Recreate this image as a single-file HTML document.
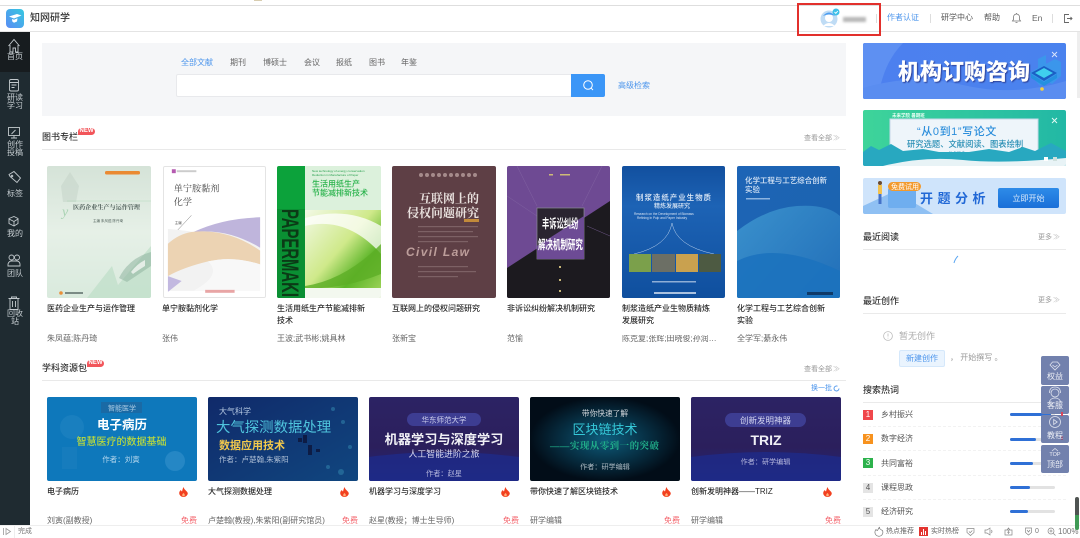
<!DOCTYPE html>
<html lang="zh"><head><meta charset="utf-8"><title>知网研学</title>
<style>
html,body{margin:0;padding:0;background:#fff;width:1080px;height:538px;overflow:hidden}
body{position:relative;font-family:"Liberation Sans","Noto Sans CJK SC",sans-serif;color:#333}
#root{position:absolute;left:0;top:0;width:1080px;height:538px;overflow:hidden;background:#fff;filter:blur(.3px)}
.b{position:absolute;box-sizing:border-box}
.t{position:absolute;white-space:nowrap;line-height:1;font-size:8px}
.side{color:#c6cdd1;text-align:center;width:30px;left:0}
.bk{font-weight:500;color:#2b2b2b}
.au{color:#666}
.h{font-size:9px;font-weight:500;color:#333}
.more{color:#999;font-size:7px}
.free{color:#f4646c;font-size:8px}
svg{position:absolute;overflow:hidden}
svg text{font-family:"Liberation Sans","Noto Sans CJK SC",sans-serif}
svg .s{font-family:"Liberation Serif","Noto Serif CJK SC",serif}
.cov{border-radius:2px}
</style></head><body><div id="root">

<!-- top strip + header -->
<div class="b" style="left:0;top:5px;width:1080px;height:1px;background:#dedede"></div>
<div class="b" style="left:254px;top:0;width:8px;height:1px;background:#d8cdb0"></div>
<div class="b" style="left:0;top:31px;width:1080px;height:1px;background:#e4e4e4"></div>
<svg style="left:6px;top:9px" width="18" height="19" viewBox="0 0 18 19"><defs><linearGradient id="lg" x1="0" y1="1" x2="1" y2="0"><stop offset="0" stop-color="#5a8cf5"/><stop offset="1" stop-color="#35c8e0"/></linearGradient></defs><rect width="18" height="19" rx="4" fill="url(#lg)"/><path d="M3 7.500L11 5l4.500 1.500L8 9.500z" fill="#fff"/><path d="M6 10l2 .8 3.500-1.500-.5 3.200-3 1.200L6.300 12.500z" fill="#fff"/></svg>
<div class="t" style="left:30px;top:14px;font-size:10px;font-weight:500;color:#333">知网研学</div>

<div class="b" style="left:797px;top:3px;width:84px;height:33px;border:2px solid #e2302c"></div>
<svg style="left:820px;top:8px" width="22" height="20" viewBox="0 0 22 20"><circle cx="9" cy="11" r="8.500" fill="#bfdcf5"/><circle cx="9" cy="10" r="4" fill="#fff"/><path d="M3 8q6-7 12 0q-6-3-12 0z" fill="#4c9df0"/><path d="M3 18q6-6 12 0z" fill="#fff"/><circle cx="16" cy="4" r="3.500" fill="#3ec0e8"/><path d="M14.500 4l1.300 1.300 2-2.300" stroke="#fff" fill="none" stroke-width=".9"/></svg>
<div class="b" style="left:843px;top:17px;width:23px;height:5px;background:#b8b8b8;filter:blur(1.200px)"></div>
<div class="b" style="left:876px;top:14px;width:1px;height:9px;background:#ddd"></div>
<div class="t" style="left:887px;top:14px;color:#4c95ec">作者认证</div>
<div class="b" style="left:930px;top:14px;width:1px;height:9px;background:#ddd"></div>
<div class="t" style="left:941px;top:14px;color:#555">研学中心</div>
<div class="t" style="left:984px;top:14px;color:#555">帮助</div>
<svg style="left:1011px;top:12px" width="11" height="12" viewBox="0 0 11 12" fill="none" stroke="#777" stroke-width=".8"><path d="M1.500 9h8l-1-1.500V5a3 3 0 0 0-6 0v2.500z"/><path d="M4.500 10.500h2M5.500 1v1"/></svg>
<div class="t" style="left:1032px;top:14px;color:#666;font-size:8.500px">En</div>
<div class="b" style="left:1052px;top:14px;width:1px;height:9px;background:#ddd"></div>
<svg style="left:1063px;top:13px" width="10" height="11" viewBox="0 0 10 11" fill="none" stroke="#666" stroke-width=".9"><path d="M6 1.500H1.500v8H6M4 5.500h5M7.500 4L9 5.500 7.500 7"/></svg>

<!-- sidebar -->
<div class="b" style="left:0;top:32px;width:30px;height:493px;background:#1f2b31"></div>
<div class="b" style="left:0;top:32px;width:30px;height:40px;background:#171c1f"></div>
<svg style="left:0;top:32px" width="30" height="290" viewBox="0 0 30 290" fill="none" stroke="#c2c9cd" stroke-width=".9">
<path d="M8.500 14L14 7.500 19.500 14M10 13v7h3v-4h2.500v4H18v-7"/>
<rect x="9.500" y="47.500" width="9" height="11.500" rx="1.500"/><path d="M9.500 50.500h9M11.500 53h5M11.500 55.500h3"/>
<rect x="8.500" y="95.500" width="11" height="8"/><path d="M11 106h6M14 103.500v2.500M11.500 102l4-4"/>
<path d="M9 142.500l5-3 6.500 6.500-3.500 4.500-7-6z"/><circle cx="12" cy="144" r=".8"/>
<path d="M14 184.500l4 2v5l-4 2.500-5-2.500v-5zM9 187l5 2.500 4-2.500M14 189.500V194"/>
<circle cx="11.500" cy="225.500" r="2.500"/><circle cx="17" cy="225.500" r="2.500"/><path d="M8 234v-2q1-3 3.500-3h5q3 0 3.500 3v2z"/>
<path d="M8.500 266.500h11M11.500 266.500v-1.500h5v1.500M10 266.500v11h8v-11M12.500 269v6M15.500 269v6"/>
</svg>
<div class="t side" style="top:53px">首页</div>
<div class="t side" style="top:94px">研读</div><div class="t side" style="top:102px">学习</div>
<div class="t side" style="top:141px">创作</div><div class="t side" style="top:149px">投稿</div>
<div class="t side" style="top:190px">标签</div>
<div class="t side" style="top:230px">我的</div>
<div class="t side" style="top:270px">团队</div>
<div class="t side" style="top:310px">回收</div><div class="t side" style="top:318px">站</div>

<!-- search panel -->
<div class="b" style="left:42px;top:43px;width:804px;height:73px;background:#f5f6f8"></div>
<div class="t" style="left:181px;top:59px;color:#4c95ec">全部文献</div>
<div class="t" style="left:230px;top:59px;color:#666">期刊</div>
<div class="t" style="left:263px;top:59px;color:#666">博硕士</div>
<div class="t" style="left:304px;top:59px;color:#666">会议</div>
<div class="t" style="left:336px;top:59px;color:#666">报纸</div>
<div class="t" style="left:369px;top:59px;color:#666">图书</div>
<div class="t" style="left:401px;top:59px;color:#666">年鉴</div>
<div class="b" style="left:176px;top:74px;width:396px;height:23px;background:#fff;border:1px solid #e8e9ec;border-radius:2px"></div>
<div class="b" style="left:571px;top:74px;width:34px;height:23px;background:#3b96f7;border-radius:0 2px 2px 0"></div>
<svg style="left:582px;top:79px" width="13" height="13" viewBox="0 0 13 13" fill="none" stroke="#fff" stroke-width="1"><circle cx="6" cy="6" r="4.300"/><path d="M9.200 9.200L11 11"/></svg>
<div class="t" style="left:618px;top:82px;color:#4c95ec">高级检索</div>

<!-- section 1 -->
<div class="t h" style="left:42px;top:133px">图书专栏</div>
<div class="b" style="left:78px;top:128px;width:17px;height:7px;background:#f2555a;border-radius:4px 4px 4px 0;color:#fff;font-size:6px;line-height:7px;text-align:center;font-weight:700">NEW</div>
<div class="t more" style="left:804px;top:135px">查看全部</div><div class="t more" style="left:833px;top:135px;color:#bbb">≫</div>
<div class="b" style="left:42px;top:149px;width:804px;height:1px;background:#e9e9e9"></div>

<!-- Book 1 -->
<svg class="cov" style="left:47px;top:166px" width="104" height="132" viewBox="0 0 104 132">
<defs><linearGradient id="b1" x1="0" y1="0" x2="0" y2="1"><stop offset="0" stop-color="#d5e3d8"/><stop offset=".5" stop-color="#e6f0e7"/><stop offset="1" stop-color="#d9eadd"/></linearGradient></defs>
<rect width="104" height="132" fill="url(#b1)"/>
<path d="M14 20l9-14 9 14-3 16H16z" fill="#c5d3c8" opacity=".55"/>
<rect x="58" y="5" width="35" height="3.500" rx="1.500" fill="#ea8a32"/>
<path d="M20 35H104" stroke="#a8d4b4" stroke-width=".4"/>
<text class="s" x="26" y="43.500" font-size="6.100" font-weight="700" fill="#4a5a55">医药企业生产与运作管理</text>
<text x="46" y="56" font-size="3.500" fill="#55655f">主编  朱凤蕴  陈丹琦</text>
<text class="s" x="15" y="50" font-size="14" font-style="italic" fill="#a9d3b3">y</text>
<path d="M60 132L104 80V132zM40 132l25-32 10 32z" fill="#bddec8" opacity=".7"/>
<path d="M72 112q10-20 32-26v14q-15 10-24 16z" fill="#8fb4a1" opacity=".55"/>
<path d="M84 106q6-8 14-12v6q-8 5-12 8z" fill="#f2f6f3" opacity=".8"/>
<circle cx="14" cy="127" r="1.800" fill="#e9903a"/><rect x="18" y="126" width="18" height="2" fill="#7b8b85"/>
</svg>
<!-- Book 2 -->
<svg class="cov" style="left:162.500px;top:166px;border:.5px solid #e4e4e4;box-sizing:border-box" width="103" height="132" viewBox="0 0 103 132">
<rect width="103" height="132" fill="#fff"/>
<rect x="8" y="2" width="4" height="4" fill="#b55ab0"/><rect x="13" y="3" width="20" height="2" fill="#ccc"/>
<text class="s" x="10" y="24.500" font-size="9.300" fill="#444">单宁胺黏剂</text>
<text class="s" x="10" y="38.500" font-size="9.300" fill="#444">化学</text>
<path d="M14 64L28 49" stroke="#777" stroke-width=".5"/><text x="11" y="58" font-size="3.500" fill="#555">主编</text>
<path d="M4 63Q18 64 30 66Q60 52 98 51V126H4z" fill="#f2f2f2"/>
<path d="M30 66Q60 52 98 51V82Q65 62 30 66z" fill="#bfb5dc"/>
<path d="M4 78Q15 68 28 66Q65 62 98 85V99Q70 90 45 96Q20 102 4 111z" fill="#ecd3b3"/>
<path d="M4 111V127L18 116z" fill="#c2b8e0"/>
<path d="M45 96Q70 90 98 99V126H30Q60 110 45 96z" fill="#f8f8f8"/>
<rect x="42" y="125" width="30" height="3" fill="#e8a5a5"/>
</svg>
<!-- Book 3 -->
<svg class="cov" style="left:277px;top:166px" width="104" height="132" viewBox="0 0 104 132">
<defs><linearGradient id="b3" x1="0" y1="0" x2="1" y2="1"><stop offset="0" stop-color="#f2f9e6"/><stop offset=".45" stop-color="#cfe98a"/><stop offset=".7" stop-color="#5cb528"/><stop offset="1" stop-color="#a8d860"/></linearGradient></defs>
<rect width="104" height="132" fill="#d9efd8"/>
<rect x="28" y="0" width="76" height="44" fill="#dcf1dc"/>
<rect x="28" y="44" width="76" height="88" fill="url(#b3)"/>
<path d="M28 60Q70 50 104 88V60Q70 40 28 52z" fill="#fff" opacity=".75"/>
<path d="M28 120q40-6 76-42v30q-40 16-76 14z" fill="#5cae26" opacity=".8"/>
<rect x="28" y="122" width="76" height="10" fill="#f3f8ef"/>
<rect width="28" height="132" fill="#0ca23b"/>
<rect x="0" y="43" width="28" height="89" fill="#0a8f33"/>
<text x="35" y="6" font-size="3" fill="#2aa050">New technology of energy conservation</text>
<text x="35" y="10" font-size="3" fill="#2aa050">Reduction in Manufacture of Paper</text>
<text x="35" y="20.500" font-size="8" font-weight="500" fill="#27b24a">生活用纸生产</text>
<text x="35" y="29.500" font-size="8" font-weight="500" fill="#27b24a">节能减排新技术</text>
<text transform="translate(4,43) rotate(90)" font-size="24" font-weight="700" textLength="88" lengthAdjust="spacingAndGlyphs" fill="#0b3a16" y="-1">PAPERMAKI</text>
</svg>
<!-- Book 4 -->
<svg class="cov" style="left:392px;top:166px" width="104" height="132" viewBox="0 0 104 132">
<rect width="104" height="132" fill="#5e3f45"/>
<g fill="#a58b8b"><circle cx="29" cy="9" r="2"/><circle cx="35" cy="9" r="2"/><circle cx="41" cy="9" r="2"/><circle cx="47" cy="9" r="2"/><circle cx="53" cy="9" r="2"/><circle cx="59" cy="9" r="2"/><circle cx="65" cy="9" r="2"/><circle cx="71" cy="9" r="2"/><circle cx="77" cy="9" r="2"/><circle cx="83" cy="9" r="2"/></g>
<text class="s" x="27" y="36.500" font-size="12" font-weight="700" fill="#e9e1de">互联网上的</text>
<text class="s" x="15" y="51" font-size="12" font-weight="700" fill="#e9e1de">侵权问题研究</text>
<rect x="72" y="53" width="15" height="3" fill="#c28a3a"/>
<g fill="#7d6165"><rect x="26" y="60" width="60" height="1.200"/><rect x="26" y="65" width="55" height="1.200"/><rect x="26" y="70" width="60" height="1.200"/><rect x="26" y="75" width="50" height="1.200"/><rect x="26" y="100" width="50" height="1.200"/><rect x="26" y="105" width="58" height="1.200"/><rect x="26" y="110" width="40" height="1.200"/></g>
<text x="14" y="90" font-size="12" font-weight="700" font-style="italic" fill="#bd9e9b" textLength="63">Civil Law</text>
</svg>
<!-- Book 5 -->
<svg class="cov" style="left:507px;top:166px" width="103" height="132" viewBox="0 0 103 132">
<rect width="103" height="132" fill="#6e4a93"/>
<path d="M0 102L103 35V132H0z" fill="#1c1a1f"/>
<path d="M10 0L30 40M95 0L75 40M0 30L30 50M103 70L80 60" stroke="#8568a5" stroke-width=".4" fill="none"/>
<rect x="42" y="8" width="4" height="1.500" fill="#cdbb77"/><rect x="53" y="8" width="10" height="1.500" fill="#cdbb77"/>
<rect x="30" y="42" width="47" height="51" fill="#2a2430" stroke="#8d8d96" stroke-width=".7"/>
<path d="M30 93V80L77 50V93z" fill="#6d4b95"/>
<text transform="translate(35,62) scale(1,1.700)" font-size="7.300" font-weight="700" fill="#fff">丰诉讼纠纷</text>
<text transform="translate(31,83) scale(1,1.700)" font-size="7.500" font-weight="700" fill="#fff">解决机制研究</text>
<g fill="#c9b878"><rect x="52" y="100" width="2" height="2"/><rect x="52" y="113" width="2" height="2"/><rect x="52" y="124" width="2" height="2"/></g>
</svg>
<!-- Book 6 -->
<svg class="cov" style="left:622px;top:166px" width="103" height="132" viewBox="0 0 103 132">
<defs><linearGradient id="b6" x1="0" y1="0" x2="0" y2="1"><stop offset="0" stop-color="#12509f"/><stop offset=".3" stop-color="#1d63b5"/><stop offset="1" stop-color="#0f4f9e"/></linearGradient></defs>
<rect width="103" height="132" fill="url(#b6)"/>
<text x="14" y="34" font-size="7.500" font-weight="500" fill="#e8f0fa" textLength="75">制浆造纸产业生物质</text>
<text x="32" y="42" font-size="6" font-weight="500" fill="#dbe7f6">精炼发展研究</text>
<text x="12" y="49" font-size="3.200" fill="#d5e2f3">Research on the Development of Biomass</text>
<text x="15" y="53" font-size="3.200" fill="#d5e2f3">Refining in Pulp and Paper Industry</text>
<path d="M50 57Q46 80 12 88M50 57Q54 80 92 88" stroke="#bcd2ec" stroke-width=".5" fill="none"/>
<rect x="7" y="88" width="22" height="18" fill="#7ba04b"/>
<rect x="30" y="88" width="23" height="18" fill="#6c6f65"/>
<rect x="54" y="88" width="22" height="18" fill="#c9a14f"/>
<rect x="77" y="88" width="22" height="18" fill="#4d5a42"/>
<rect x="30" y="115" width="44" height="1.500" fill="#8eaed6"/><rect x="32" y="126" width="42" height="2" fill="#aac2e0"/>
</svg>
<!-- Book 7 -->
<svg class="cov" style="left:737px;top:166px" width="103" height="132" viewBox="0 0 103 132">
<defs><linearGradient id="b7" x1="0" y1="0" x2="1" y2="1"><stop offset="0" stop-color="#1d64b6"/><stop offset="1" stop-color="#1c64ad"/></linearGradient><linearGradient id="b7b" x1="0" y1="0" x2="1" y2=".8"><stop offset="0" stop-color="#52b5e0"/><stop offset="1" stop-color="#2a7cc4"/></linearGradient></defs>
<rect width="103" height="132" fill="url(#b7)"/>
<path d="M0 65Q30 42 60 40T103 50V132H0z" fill="url(#b7b)" opacity=".55"/>
<path d="M0 95Q40 75 103 105V132H0z" fill="#1c72be" opacity=".9"/>
<text x="8" y="17" font-size="7.500" font-weight="500" fill="#dbe8f7" textLength="82">化学工程与工艺综合创新</text>
<text x="8" y="26" font-size="7.500" font-weight="500" fill="#dbe8f7">实验</text>
<rect x="9" y="32" width="24" height="1.500" fill="#8cb4e0"/>
<rect x="70" y="126" width="26" height="3" fill="#0f3a68"/>
</svg>

<div class="t bk" style="left:47px;top:305px">医药企业生产与运作管理</div>
<div class="t bk" style="left:162px;top:305px">单宁胺黏剂化学</div>
<div class="t bk" style="left:277px;top:305px">生活用纸生产节能减排新</div><div class="t bk" style="left:277px;top:317px">技术</div>
<div class="t bk" style="left:392px;top:305px">互联网上的侵权问题研究</div>
<div class="t bk" style="left:507px;top:305px">非诉讼纠纷解决机制研究</div>
<div class="t bk" style="left:622px;top:305px">制浆造纸产业生物质精炼</div><div class="t bk" style="left:622px;top:317px">发展研究</div>
<div class="t bk" style="left:737px;top:305px">化学工程与工艺综合创新</div><div class="t bk" style="left:737px;top:317px">实验</div>
<div class="t au" style="left:47px;top:335px">朱凤蕴;陈丹琦</div>
<div class="t au" style="left:162px;top:335px">张伟</div>
<div class="t au" style="left:277px;top:335px">王波;武书彬;姚具林</div>
<div class="t au" style="left:392px;top:335px">张新宝</div>
<div class="t au" style="left:507px;top:335px">范愉</div>
<div class="t au" style="left:622px;top:335px;width:100px;overflow:hidden;text-overflow:ellipsis">陈克复;张辉;田晓俊;孙润仓;...</div>
<div class="t au" style="left:737px;top:335px">全学军;綦永伟</div>

<!-- section 2 -->
<div class="t h" style="left:42px;top:364px">学科资源包</div>
<div class="b" style="left:87px;top:360px;width:17px;height:7px;background:#f2555a;border-radius:4px 4px 4px 0;color:#fff;font-size:6px;line-height:7px;text-align:center;font-weight:700">NEW</div>
<div class="t more" style="left:804px;top:366px">查看全部</div><div class="t more" style="left:833px;top:366px;color:#bbb">≫</div>
<div class="b" style="left:42px;top:380px;width:804px;height:1px;background:#e9e9e9"></div>
<div class="t" style="left:811px;top:385px;color:#4c95ec;font-size:7px">换一批</div>
<svg style="left:833px;top:385px" width="7" height="7" viewBox="0 0 7 7" fill="none" stroke="#4c95ec" stroke-width=".9"><path d="M6 3.500A2.500 2.500 0 1 1 4.500 1.200"/></svg>

<!-- Cards -->
<svg class="cov" style="left:47px;top:397px" width="150" height="84" viewBox="0 0 150 84">
<rect width="150" height="84" fill="#0e78bb"/>
<circle cx="25" cy="30" r="12" fill="#2d8cc8" opacity=".35"/><circle cx="128" cy="64" r="10" fill="#3591cc" opacity=".6"/><rect x="15" y="50" width="15" height="22" fill="#2584c2" opacity=".35"/>
<rect x="54" y="5" width="41" height="11" fill="#1a6aa5"/>
<text x="75" y="13.500" text-anchor="middle" font-size="7" fill="#a9cbe4">智能医学</text>
<text x="75" y="32" text-anchor="middle" font-size="12.500" font-weight="700" fill="#fff">电子病历</text>
<text x="74.500" y="48" text-anchor="middle" font-size="10" font-weight="500" fill="#b9d83e">智慧医疗的数据基础</text>
<text x="74" y="65" text-anchor="middle" font-size="7.500" fill="#b7d8ee">作者：刘寅</text>
</svg>
<svg class="cov" style="left:208px;top:397px" width="150" height="84" viewBox="0 0 150 84">
<defs><linearGradient id="c2" x1="0" y1="0" x2="1" y2="1"><stop offset="0" stop-color="#102a6a"/><stop offset="1" stop-color="#10467f"/></linearGradient></defs>
<rect width="150" height="84" fill="url(#c2)"/>
<g fill="#2f7ea8" opacity=".6"><circle cx="125" cy="12" r="2"/><circle cx="135" cy="25" r="2"/><circle cx="142" cy="50" r="2"/><circle cx="120" cy="70" r="2"/><circle cx="133" cy="75" r="3"/></g>
<g fill="#0d1c45"><rect x="90" y="41" width="4" height="4"/><rect x="95" y="38" width="4" height="8"/><rect x="100" y="48" width="4" height="10"/><rect x="108" y="52" width="4" height="3"/></g>
<text x="11" y="17" font-size="8" fill="#b8cbe4">大气科学</text>
<text x="8" y="35" font-size="14.400" fill="#4fc4dd">大气探测数据处理</text>
<text x="11" y="52" font-size="11" font-weight="700" fill="#f2c94c">数据应用技术</text>
<text x="11" y="65" font-size="7.500" fill="#aebfd6">作者：卢楚翰,朱紫阳</text>
</svg>
<svg class="cov" style="left:369px;top:397px" width="150" height="84" viewBox="0 0 150 84">
<defs><linearGradient id="c3" x1="0" y1="0" x2="0" y2="1"><stop offset="0" stop-color="#2c2364"/><stop offset=".6" stop-color="#2b1f5c"/><stop offset="1" stop-color="#20267e"/></linearGradient></defs>
<rect width="150" height="84" fill="url(#c3)"/>
<path d="M0 60Q75 50 150 60V84H0z" fill="#1e2a88" opacity=".8"/>
<rect x="38" y="16" width="74" height="13" rx="6.500" fill="#3d3d92"/>
<text x="75" y="25.500" text-anchor="middle" font-size="7.500" fill="#cfd1ee">华东师范大学</text>
<text x="75" y="47" text-anchor="middle" font-size="13.200" font-weight="700" fill="#f0f0f5">机器学习与深度学习</text>
<text x="75" y="60" text-anchor="middle" font-size="8.900" fill="#d9daf0">人工智能进阶之旅</text>
<text x="75" y="79" text-anchor="middle" font-size="7.200" fill="#b4b6dc">作者：赵星</text>
</svg>
<svg class="cov" style="left:530px;top:397px" width="150" height="84" viewBox="0 0 150 84">
<defs><radialGradient id="c4"><stop offset="0" stop-color="#0d5c7c"/><stop offset="1" stop-color="#020d18"/></radialGradient></defs>
<rect width="150" height="84" fill="url(#c4)"/>
<text x="75" y="19" text-anchor="middle" font-size="7.700" fill="#cfd5da">带你快速了解</text>
<text x="75" y="37" text-anchor="middle" font-size="13" fill="#35c8d8">区块链技术</text>
<text x="20" y="52" font-size="9.500" class="s" font-weight="700" fill="#21b08a" textLength="109">——实现从零到一的突破</text>
<text x="75" y="72" text-anchor="middle" font-size="7.100" fill="#aab8c0">作者：研学编辑</text>
</svg>
<svg class="cov" style="left:691px;top:397px" width="150" height="84" viewBox="0 0 150 84">
<rect width="150" height="84" fill="url(#c3)"/>
<path d="M0 60Q75 50 150 60V84H0z" fill="#1e2a88" opacity=".8"/>
<rect x="34" y="16" width="81" height="14" rx="7" fill="#3d3d92"/>
<text x="74.500" y="26.500" text-anchor="middle" font-size="8.500" fill="#d4d6f0">创新发明神器</text>
<text x="75" y="48" text-anchor="middle" font-size="14" font-weight="700" fill="#f0f0f5">TRIZ</text>
<text x="74.500" y="67" text-anchor="middle" font-size="7.100" fill="#b4b6dc">作者：研学编辑</text>
</svg>

<div class="t bk" style="left:47px;top:488px">电子病历</div>
<div class="t bk" style="left:208px;top:488px">大气探测数据处理</div>
<div class="t bk" style="left:369px;top:488px">机器学习与深度学习</div>
<div class="t bk" style="left:530px;top:488px">带你快速了解区块链技术</div>
<div class="t bk" style="left:691px;top:488px">创新发明神器——TRIZ</div>
<svg style="left:179px;top:487px" width="9" height="10" viewBox="0 0 9 10"><path d="M4.500 0q.5 2 2.300 3.500T8.800 6.300a4.300 3.700 0 0 1-8.600 0q0-2.300 1.800-3.300 0 1 1 1.500Q3.500 2 4.500 0z" fill="#f2401f"/><path d="M4.500 6q1.300 1 1.300 2a1.300 1.300 0 0 1-2.600 0Q3.200 7 4.500 6z" fill="#ffb27a"/></svg>
<svg style="left:340px;top:487px" width="9" height="10" viewBox="0 0 9 10"><path d="M4.500 0q.5 2 2.300 3.500T8.800 6.300a4.300 3.700 0 0 1-8.600 0q0-2.300 1.800-3.300 0 1 1 1.500Q3.500 2 4.500 0z" fill="#f2401f"/><path d="M4.500 6q1.300 1 1.300 2a1.300 1.300 0 0 1-2.600 0Q3.200 7 4.500 6z" fill="#ffb27a"/></svg>
<svg style="left:501px;top:487px" width="9" height="10" viewBox="0 0 9 10"><path d="M4.500 0q.5 2 2.300 3.500T8.800 6.300a4.300 3.700 0 0 1-8.600 0q0-2.300 1.800-3.300 0 1 1 1.500Q3.500 2 4.500 0z" fill="#f2401f"/><path d="M4.500 6q1.300 1 1.300 2a1.300 1.300 0 0 1-2.600 0Q3.200 7 4.500 6z" fill="#ffb27a"/></svg>
<svg style="left:662px;top:487px" width="9" height="10" viewBox="0 0 9 10"><path d="M4.500 0q.5 2 2.300 3.500T8.800 6.300a4.300 3.700 0 0 1-8.600 0q0-2.300 1.800-3.300 0 1 1 1.500Q3.500 2 4.500 0z" fill="#f2401f"/><path d="M4.500 6q1.300 1 1.300 2a1.300 1.300 0 0 1-2.600 0Q3.200 7 4.500 6z" fill="#ffb27a"/></svg>
<svg style="left:823px;top:487px" width="9" height="10" viewBox="0 0 9 10"><path d="M4.500 0q.5 2 2.300 3.500T8.800 6.300a4.300 3.700 0 0 1-8.600 0q0-2.300 1.800-3.300 0 1 1 1.500Q3.500 2 4.500 0z" fill="#f2401f"/><path d="M4.500 6q1.300 1 1.300 2a1.300 1.300 0 0 1-2.600 0Q3.200 7 4.500 6z" fill="#ffb27a"/></svg>

<div class="t au" style="left:47px;top:517px">刘寅(副教授)</div>
<div class="t au" style="left:208px;top:517px">卢楚翰(教授),朱紫阳(副研究馆员)</div>
<div class="t au" style="left:369px;top:517px">赵星(教授；博士生导师)</div>
<div class="t au" style="left:530px;top:517px">研学编辑</div>
<div class="t au" style="left:691px;top:517px">研学编辑</div>
<div class="t free" style="left:181px;top:517px">免费</div>
<div class="t free" style="left:342px;top:517px">免费</div>
<div class="t free" style="left:503px;top:517px">免费</div>
<div class="t free" style="left:664px;top:517px">免费</div>
<div class="t free" style="left:825px;top:517px">免费</div>

<!-- right banners -->
<svg class="cov" style="left:863px;top:43px" width="203" height="56" viewBox="0 0 203 56">
<defs><linearGradient id="r1" x1="0" y1="0" x2="1" y2="0"><stop offset="0" stop-color="#4d80ef"/><stop offset="1" stop-color="#4a82ee"/></linearGradient></defs>
<rect width="203" height="56" fill="url(#r1)"/>
<path d="M0 0H40Q20 20 15 56H0z" fill="#5e90f2"/>
<path d="M0 56V45Q50 30 100 42T203 38V56z" fill="#5a8df0"/>
<path d="M166 30l9-5v-9l8-4v9l9-5 6 3v14l-9 8-5-3-7 5z" fill="#2fa8ea" opacity=".55"/>
<path d="M168 30l13-7 13 7-13 8z" fill="#1b5fc4"/>
<path d="M172 30l9-5 9 5-9 5z" fill="#3fd0ee"/>
<path d="M168 31l13 8 13-8v4l-13 8-13-8z" fill="#2490e0"/>
<circle cx="179" cy="46" r="1.800" fill="#f5cf40"/>
<text x="35" y="36.500" font-size="22" font-weight="700" fill="#fff" stroke="#fff" stroke-width=".35" style="filter:drop-shadow(1px 1.500px .6px #2c3f95)">机构订购咨询</text>
<path d="M189 9l5 5M194 9l-5 5" stroke="#dce6fb" stroke-width=".9"/>
</svg>
<svg class="cov" style="left:863px;top:110px" width="203" height="56" viewBox="0 0 203 56">
<defs><linearGradient id="r2" x1="0" y1="0" x2="1" y2="0"><stop offset="0" stop-color="#3ed49a"/><stop offset="1" stop-color="#22b8a5"/></linearGradient></defs>
<rect width="203" height="56" fill="url(#r2)"/>
<rect x="27" y="9" width="148" height="39" fill="#eef5fa" stroke="#c6d8e8" stroke-width="1"/>
<text x="29" y="7" font-size="4.500" font-weight="700" fill="#eafff5">未来学院 暑期班</text>
<text x="54" y="25" font-size="11" font-weight="500" fill="#2a8ddb" letter-spacing=".6">“从0到1”写论文</text>
<text x="44" y="37" font-size="8.300" font-weight="500" fill="#2a8fb5">研究选题、文献阅读、图表绘制</text>
<text x="82" y="45" font-size="4.500" class="s" fill="#2a8fb5">· 点点就会 ·</text>
<path d="M0 56V42l8-6 8 4 12-6 12 7 20-2 16 3h30l20-3 20 3 14-5 12 4 16-8 15 8V56z" fill="#28a8c0"/>
<path d="M20 56Q60 46 100 50T203 48V56z" fill="#e8f3f6"/>
<rect x="181" y="47" width="4" height="4" fill="#fff"/><rect x="190" y="47" width="4" height="4" fill="#cfe0dd"/>
<path d="M189 8l5 5M194 8l-5 5" stroke="#e5fbf4" stroke-width=".9"/>
</svg>
<svg class="cov" style="left:863px;top:178px" width="203" height="36" viewBox="0 0 203 36">
<defs><linearGradient id="r3" x1="0" y1="0" x2="0" y2="1"><stop offset="0" stop-color="#2d8be8"/><stop offset="1" stop-color="#1a6fd8"/></linearGradient></defs>
<rect width="203" height="36" fill="#cfe4fb"/>
<path d="M0 36V28l30-14 20 10 20 12z" fill="#8fc0f3"/>
<rect x="25" y="10" width="28" height="20" rx="2" fill="#6faeef"/>
<circle cx="17" cy="5" r="2" fill="#6a4a30"/><rect x="15" y="7" width="4" height="9" fill="#f4c24e"/><rect x="15.500" y="16" width="3" height="10" fill="#4472c8"/>
<rect x="25" y="4" width="33" height="9" rx="4.500" fill="#f29a2e"/>
<text x="28" y="11" font-size="7" fill="#fff">免费试用</text>
<text x="57" y="25" font-size="13" font-weight="700" fill="#2168d6" letter-spacing="4.500">开题分析</text>
<rect x="135" y="10" width="61" height="20" rx="2" fill="url(#r3)"/>
<text x="165.500" y="23" text-anchor="middle" font-size="8" fill="#d9e9fb">立即开始</text>
</svg>

<!-- right lists -->
<div class="t h" style="left:863px;top:233px">最近阅读</div>
<div class="t more" style="left:1038px;top:234px">更多</div><div class="t more" style="left:1053px;top:234px;color:#bbb">≫</div>
<div class="b" style="left:863px;top:249px;width:203px;height:1px;background:#eaeaea"></div>
<svg style="left:953px;top:254px" width="6" height="10" viewBox="0 0 6 10"><path d="M1 9Q2 5 5 2" stroke="#5aa6f2" stroke-width="1" fill="none"/></svg>
<div class="t h" style="left:863px;top:297px">最近创作</div>
<div class="t more" style="left:1038px;top:297px">更多</div><div class="t more" style="left:1053px;top:297px;color:#bbb">≫</div>
<div class="b" style="left:863px;top:313px;width:203px;height:1px;background:#eaeaea"></div>
<svg style="left:883px;top:331px" width="10" height="10" viewBox="0 0 10 10" fill="none" stroke="#bbb" stroke-width=".8"><circle cx="5" cy="5" r="4.400"/><path d="M5 2.500v3M5 6.800v.7"/></svg>
<div class="t" style="left:899px;top:332px;font-size:9px;color:#aaa">暂无创作</div>
<div class="b" style="left:899px;top:350px;width:46px;height:17px;background:#eaf4fe;border:1px solid #d5e8fb;border-radius:2px;color:#4c95ec;font-size:8px;line-height:15px;text-align:center">新建创作</div>
<div class="t" style="left:950px;top:354px;color:#999">，&nbsp;开始撰写 。</div>

<div class="t h" style="left:863px;top:386px">搜索热词</div>
<div class="b" style="left:863px;top:402px;width:203px;height:1px;background:#eaeaea"></div>

<div class="b" style="left:863px;top:410px;width:10px;height:10px;background:#f0474b;color:#fff;font-size:8px;line-height:10px;text-align:center">1</div>
<div class="t" style="left:881px;top:411px;color:#555">乡村振兴</div>
<div class="b" style="left:1010px;top:413px;width:45px;height:3px;background:#e2e2e2;border-radius:2px"></div><div class="b" style="left:1010px;top:413px;width:41px;height:3px;background:#2f70d6;border-radius:2px"></div>
<div class="b" style="left:863px;top:434px;width:10px;height:10px;background:#f7921e;color:#fff;font-size:8px;line-height:10px;text-align:center">2</div>
<div class="t" style="left:881px;top:435px;color:#555">数字经济</div>
<div class="b" style="left:1010px;top:438px;width:45px;height:3px;background:#e2e2e2;border-radius:2px"></div><div class="b" style="left:1010px;top:438px;width:26px;height:3px;background:#2f70d6;border-radius:2px"></div>
<div class="b" style="left:863px;top:458px;width:10px;height:10px;background:#2cb24c;color:#fff;font-size:8px;line-height:10px;text-align:center">3</div>
<div class="t" style="left:881px;top:460px;color:#555">共同富裕</div>
<div class="b" style="left:1010px;top:462px;width:45px;height:3px;background:#e2e2e2;border-radius:2px"></div><div class="b" style="left:1010px;top:462px;width:23px;height:3px;background:#2f70d6;border-radius:2px"></div>
<div class="b" style="left:863px;top:483px;width:10px;height:10px;background:#e4e4e4;color:#555;font-size:8px;line-height:10px;text-align:center">4</div>
<div class="t" style="left:881px;top:484px;color:#555">课程思政</div>
<div class="b" style="left:1010px;top:486px;width:45px;height:3px;background:#e2e2e2;border-radius:2px"></div><div class="b" style="left:1010px;top:486px;width:20px;height:3px;background:#2f70d6;border-radius:2px"></div>
<div class="b" style="left:863px;top:507px;width:10px;height:10px;background:#e4e4e4;color:#555;font-size:8px;line-height:10px;text-align:center">5</div>
<div class="t" style="left:881px;top:508px;color:#555">经济研究</div>
<div class="b" style="left:1010px;top:510px;width:45px;height:3px;background:#e2e2e2;border-radius:2px"></div><div class="b" style="left:1010px;top:510px;width:18px;height:3px;background:#2f70d6;border-radius:2px"></div>
<div class="b" style="left:863px;top:426px;width:203px;border-top:1px dashed #f2f2f2"></div>
<div class="b" style="left:863px;top:450px;width:203px;border-top:1px dashed #f2f2f2"></div>
<div class="b" style="left:863px;top:475px;width:203px;border-top:1px dashed #f2f2f2"></div>
<div class="b" style="left:863px;top:499px;width:203px;border-top:1px dashed #f2f2f2"></div>

<!-- floating buttons -->
<div class="b" style="left:1041px;top:356px;width:28px;height:28.500px;background:#7281ad;border-radius:2px"></div>
<div class="b" style="left:1041px;top:386px;width:28px;height:28px;background:#7281ad;border-radius:2px"></div>
<div class="b" style="left:1041px;top:415px;width:28px;height:28px;background:#7281ad;border-radius:2px"></div>
<div class="b" style="left:1041px;top:444.500px;width:28px;height:28px;background:#7281ad;border-radius:2px"></div>
<div class="b" style="left:1061px;top:412px;width:2px;height:4px;background:#d9465a"></div>
<div class="b" style="left:1061px;top:436px;width:2px;height:4px;background:#8a5a80"></div>
<svg style="left:1041px;top:356px" width="28" height="117" viewBox="0 0 28 117" fill="none" stroke="#dfe3ee" stroke-width=".8">
<path d="M9 9l2.500-3h5L19 9l-5 5zM11.500 9l2.500 2 2.500-2"/>
<circle cx="14" cy="37" r="4"/><path d="M8.500 37q0-6 5.500-6t5.500 6M8 47q1-5 6-5t6 5"/>
<circle cx="14" cy="66" r="5.500"/><path d="M12.700 63.500v5l3.500-2.500z"/>
<path d="M11 95l3-2.500 3 2.500"/>
</svg>
<div class="t" style="left:1041px;top:373px;width:28px;text-align:center;color:#eef0f6">权益</div>
<div class="t" style="left:1041px;top:402px;width:28px;text-align:center;color:#eef0f6">客服</div>
<div class="t" style="left:1041px;top:432px;width:28px;text-align:center;color:#eef0f6">教程</div>
<div class="t" style="left:1041px;top:453px;width:28px;text-align:center;color:#eef0f6;font-size:5.500px">TOP</div>
<div class="t" style="left:1041px;top:461px;width:28px;text-align:center;color:#eef0f6">顶部</div>

<!-- status bar -->
<div class="b" style="left:0;top:525px;width:1080px;height:13px;background:#fff;border-top:1px solid #eee"></div>
<svg style="left:2px;top:527px" width="10" height="9" viewBox="0 0 10 9" fill="none" stroke="#999" stroke-width=".8"><path d="M1.500 1v7M4 1.500l4.500 3L4 7.500z"/></svg>
<div class="b" style="left:14px;top:526px;width:1px;height:12px;background:#eee"></div>
<div class="t" style="left:18px;top:528px;font-size:7px;color:#777">完成</div>
<svg style="left:874px;top:526px" width="11" height="11" viewBox="0 0 11 11" fill="none" stroke="#777" stroke-width=".7"><path d="M5.500 1q-.500 2 3 3.500a4 4 0 1 1-6.500-1q.5 1 1.500 1 1-2 2-3.500z"/></svg>
<div class="t" style="left:886px;top:528px;font-size:7px;color:#666">热点推荐</div>
<div class="b" style="left:919px;top:527px;width:9px;height:9px;background:#e3342f"></div>
<svg style="left:919px;top:527px" width="9" height="9" viewBox="0 0 9 9"><path d="M2 8V5h1v3zM4 8V2h1v6zM6 8V4h1v4z" fill="#fff"/></svg>
<div class="t" style="left:931px;top:528px;font-size:7px;color:#666">实时热榜</div>
<svg style="left:966px;top:527px" width="9" height="9" viewBox="0 0 9 9" fill="none" stroke="#888" stroke-width=".7"><path d="M1 1.500h7v4l-3.500 3-3.500-3zM3 4.500l1.200 1.200L6.300 3.500"/></svg>
<svg style="left:984px;top:527px" width="10" height="9" viewBox="0 0 10 9" fill="none" stroke="#888" stroke-width=".7"><path d="M1 3v3h2l3 2V1L3 3zM7.500 3q1 1.500 0 3"/></svg>
<svg style="left:1004px;top:527px" width="9" height="9" viewBox="0 0 9 9" fill="none" stroke="#888" stroke-width=".7"><path d="M1 3h7v5H1zM4.500 3.500v3.500M3 5.200h3M3 3l1.500-2L6 3"/></svg>
<svg style="left:1024px;top:527px" width="9" height="9" viewBox="0 0 9 9" fill="none" stroke="#888" stroke-width=".7"><path d="M1.500 1h6v4.500L4.500 8l-3-2.500zM3 3l1.500 2L6 3"/></svg>
<div class="t" style="left:1035px;top:528px;font-size:7px;color:#777">0</div>
<svg style="left:1047px;top:527px" width="9" height="9" viewBox="0 0 9 9" fill="none" stroke="#888" stroke-width=".7"><circle cx="4" cy="4" r="3"/><path d="M6.200 6.200L8.500 8.500M2.500 4h3M4 2.500v3"/></svg>
<div class="t" style="left:1058px;top:528px;font-size:8px;color:#777">100%</div>

<!-- scrollbar -->
<div class="b" style="left:1077px;top:32px;width:3px;height:66px;background:#eee"></div>
<div class="b" style="left:1075px;top:497px;width:4px;height:18px;background:#4f5452;border-radius:2px 2px 0 0"></div>
<div class="b" style="left:1075px;top:515px;width:4px;height:15px;background:#3f9a55;border-radius:0 0 2px 2px"></div>
</div></body></html>
